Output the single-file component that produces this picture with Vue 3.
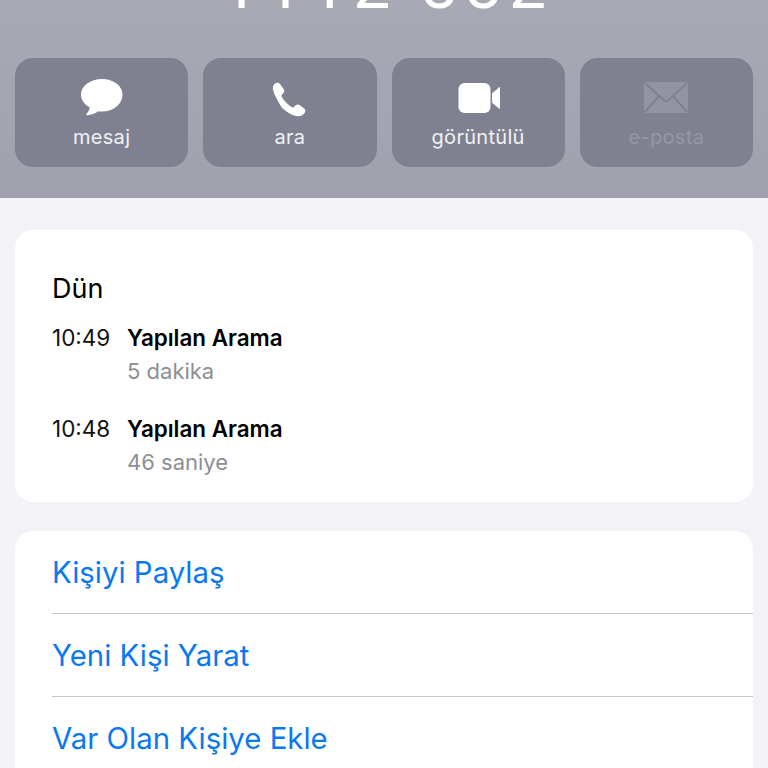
<template>
  <div class="screen">
    <header class="hero">
      <div class="number-clip">
        <div class="number">1112 882</div>
      </div>
      <div class="actions">
        <div v-for="a in actions" :key="a.label" class="action" :class="{ off: a.off }">
          <svg v-if="a.icon === 'msg'" class="icon" viewBox="0 0 44 40">
            <path fill="#fff" d="M22 1C10.400 1 1 7.900 1 16.500c0 5.400 3.400 10 8.700 12.800-.3 2.600-1.600 5-3.200 6.800-.5.600-.1 1.300.7 1.200 4-.4 8.300-1.900 11-4.100 1.200.2 2.500.3 3.800.3 11.600 0 20.500-7.400 20.500-17C42.500 7.900 33.600 1 22 1z"/>
          </svg>
          <svg v-else-if="a.icon === 'phone'" class="icon" viewBox="0 0 44 40">
            <path fill="#fff" d="M6 6.500c1.600-1.800 4.500-2.300 6-.5l3.600 5c1 1.400 1 3-.3 4.300l-1.600 1.800c-.4.500-.3 1 0 1.600 1.200 2.200 2.800 4.200 4.600 6 1.800 1.800 3.700 3.300 5.800 4.500.6.300 1.100.4 1.600 0l1.800-1.600c1.300-1.200 2.900-1.300 4.300-.3l4.400 3.300c1.800 1.400 1.500 3.800-.3 5.300-2 1.700-4.700 2.600-7.500 2.100-5.200-1-10.300-4.200-14.700-8.600C9.300 21.800 6.100 16.700 5.100 12 4.600 10 4.800 8 6 6.500z"/>
          </svg>
          <svg v-else-if="a.icon === 'video'" class="icon" viewBox="-2.500 0 44 40">
            <rect x="0" y="5" width="32" height="30" rx="6" fill="#fff"/>
            <path fill="#fff" d="M33.500 16.500c0-.9.300-1.500 1-2.100l6-5c1.300-1 3-.2 3 1.500v18.200c0 1.700-1.700 2.500-3 1.500l-6-5c-.7-.6-1-1.200-1-2.100z"/>
          </svg>
          <svg v-else class="icon" viewBox="0 0 44 40">
            <rect x="0" y="4" width="44" height="31" rx="2" class="mail-body"/>
            <path d="M1 5l18.500 17c1.500 1.300 3.500 1.300 5 0L43 5M1 34l14-16M43 34L29 18" class="mail-line"/>
          </svg>
          <span class="label">{{ a.label }}</span>
        </div>
      </div>
    </header>

    <main class="content">
      <section class="card history">
        <h2 class="day">Dün</h2>
        <div v-for="c in calls" :key="c.time" class="call">
          <span class="time">{{ c.time }}</span>
          <div class="info">
            <div class="kind">Yapılan Arama</div>
            <div class="duration">{{ c.duration }}</div>
          </div>
        </div>
      </section>

      <section class="card links">
        <div v-for="l in links" :key="l" class="link">{{ l }}</div>
      </section>
    </main>
  </div>
</template>

<script setup>
const actions = [
  { label: 'mesaj', icon: 'msg' },
  { label: 'ara', icon: 'phone' },
  { label: 'görüntülü', icon: 'video' },
  { label: 'e-posta', icon: 'mail', off: true }
]

const calls = [
  { time: '10:49', duration: '5 dakika' },
  { time: '10:48', duration: '46 saniye' }
]

const links = ['Kişiyi Paylaş', 'Yeni Kişi Yarat', 'Var Olan Kişiye Ekle']
</script>

<style>
html, body {
  margin: 0;
  overflow: hidden;
}
</style>

<style scoped>
.screen {
  width: 768px;
  height: 768px;
  overflow: hidden;
  background: #f2f2f7;
  font-family: Inter, "Liberation Sans", sans-serif;
}

.hero {
  height: 198px;
  box-sizing: border-box;
  padding: 0 15px;
  background: linear-gradient(#a8a9b5, #a0a1ad);
}

.number-clip {
  height: 58px;
  overflow: hidden;
}

.number {
  margin-top: -39px;
  padding-left: 6px;
  text-align: center;
  font-family: Roboto, "Liberation Sans", sans-serif;
  font-size: 66px;
  line-height: 50px;
  letter-spacing: 7px;
  color: #fff;
}

.actions {
  display: grid;
  grid-template-columns: repeat(4, 1fr);
  column-gap: 15px;
}

.action {
  height: 109px;
  border-radius: 18px;
  background: #7f8190;
  display: flex;
  flex-direction: column;
  align-items: center;
  padding-top: 20px;
  box-sizing: border-box;
  color: #f1f1f4;
}

.icon {
  width: 44px;
  height: 40px;
  display: block;
}

.label {
  margin-top: 7px;
  font-size: 20px;
  line-height: 24px;
  letter-spacing: 0.3px;
}

.action.off .label {
  color: #9597a3;
}

.mail-body {
  fill: #9294a1;
}

.mail-line {
  fill: none;
  stroke: #7f8190;
  stroke-width: 2;
}

.content {
  padding: 32px 15px 0;
}

.card {
  background: #fff;
  border-radius: 18px;
}

.history {
  height: 272px;
  box-sizing: border-box;
  padding: 41px 37px 0;
  margin-bottom: 29px;
}

.day {
  margin: 0 0 15px;
  font-size: 27px;
  line-height: 36px;
  font-weight: 400;
  color: #000;
}

.call {
  display: flex;
  height: 90.5px;
}

.time {
  width: 75px;
  font-size: 22.5px;
  line-height: 32px;
  color: #111;
}

.info {
  display: flex;
  flex-direction: column;
}

.kind {
  font-size: 22.4px;
  line-height: 32px;
  font-weight: 600;
  color: #000;
}

.duration {
  margin-top: 1px;
  font-size: 22px;
  line-height: 32px;
  color: #8e8e93;
}

.links {
  padding-left: 37px;
  height: 300px;
}

.link {
  height: 82px;
  border-bottom: 1px solid #c6c6c8;
  font-size: 29.4px;
  line-height: 84px;
  color: #0a78f0;
}
</style>
